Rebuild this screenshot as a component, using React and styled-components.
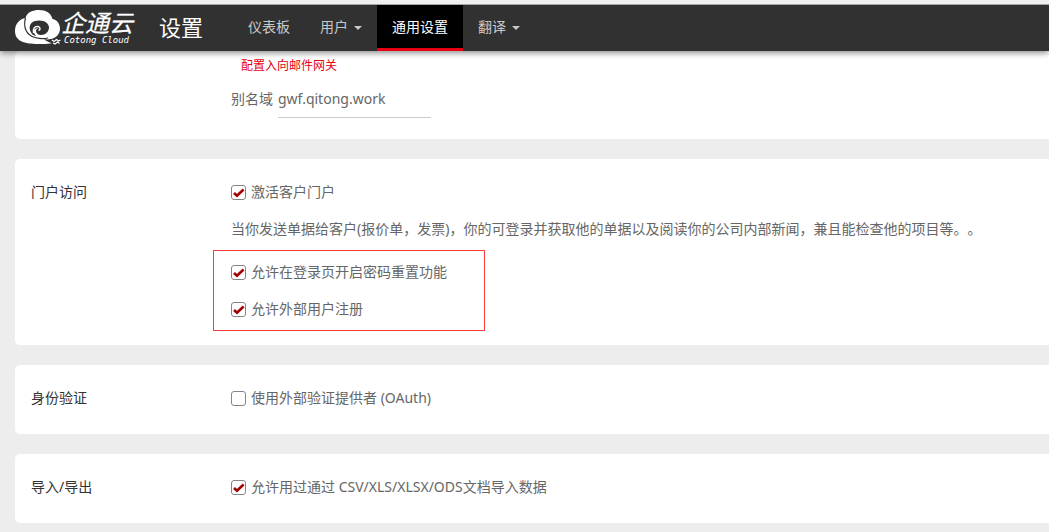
import React from "react";
import styled, { createGlobalStyle } from "styled-components";

const GlobalStyle = createGlobalStyle`
  *, *::before, *::after { box-sizing: border-box; }
  body {
    margin: 0;
    background: #ededed;
    color: #666;
    font: 14px/20px "Noto Sans", "Noto Sans CJK SC", sans-serif;
    text-spacing-trim: space-all;
    overflow-x: hidden;
  }
`;

const Header = styled.header`
  position: relative;
  display: flex;
  align-items: stretch;
  height: 51px;
  padding-left: 15px;
  border-top: 4px solid #f0f0f0;
  background: #313131;
  box-shadow: 0 2px 6px rgba(0, 0, 0, 0.45), inset 0 1px 0 #a6a6a6;
`;

const Brand = styled.a`
  display: flex;
  align-items: center;
  margin-right: 24px;
`;

const Title = styled.h1`
  margin: 0 30px 0 0;
  padding-bottom: 2px;
  align-self: center;
  color: #fff;
  font-size: 22px;
  font-weight: 400;
  line-height: 30px;
`;

const Nav = styled.nav`
  display: flex;
  padding-top: 1px;
`;

const NavButton = styled.button`
  display: flex;
  align-items: center;
  gap: 6px;
  padding: 0 15px;
  border: 0;
  border-bottom: 3px solid ${(p) => (p.$active ? "#e60012" : "transparent")};
  background: ${(p) => (p.$active ? "#000" : "transparent")};
  color: ${(p) => (p.$active ? "#fff" : "#c9c9c9")};
  font: inherit;
  white-space: nowrap;
  cursor: pointer;
`;

const Caret = styled.span`
  margin-top: 2px;
  border: 4px solid transparent;
  border-top-color: currentColor;
  border-bottom: 0;
`;

const Page = styled.main`
  display: flex;
  flex-direction: column;
  gap: 20px;
  padding: 0 0 9px 15px;
`;

const Card = styled.section`
  display: flex;
  padding: ${(p) => p.$padding || "23px 16px 26px"};
  border-radius: 5px 0 0 5px;
  background: #fff;
`;

const CardTitle = styled.h2`
  flex: 0 0 200px;
  margin: 0;
  color: #333;
  font-size: 14px;
  font-weight: 400;
  line-height: 20px;
`;

const CardBody = styled.div`
  flex: 1;
  min-width: 0;
`;

const GatewayLink = styled.a`
  display: block;
  width: fit-content;
  margin: 0 0 14px 10px;
  color: #e60012;
  font-size: 12px;
  line-height: 18px;
  text-decoration: none;
`;

const Field = styled.div`
  display: flex;
  align-items: flex-start;
  gap: 5px;
`;

const TextInput = styled.input`
  width: 153px;
  height: 29px;
  padding: 0 0 10px;
  border: 0;
  border-bottom: 1px solid #ccc;
  border-radius: 0;
  background: transparent;
  color: #666;
  font: inherit;
  outline: 0;
`;

const Description = styled.p`
  margin: 17px 0 11px;
`;

const Highlight = styled.div`
  display: flex;
  flex-direction: column;
  gap: 17px;
  width: 272px;
  margin-left: -18px;
  padding: 11px 17px;
  border: 1px solid #fc3c3c;
`;

const CheckLabel = styled.label`
  display: flex;
  align-items: center;
  gap: 5px;
  width: fit-content;
  white-space: nowrap;
`;

const CheckBox = styled.span`
  display: grid;
  width: 15px;
  height: 15px;

  > * { grid-area: 1 / 1; }
  > svg { pointer-events: none; visibility: hidden; }
  > input:checked + svg { visibility: visible; }
`;

const CheckInput = styled.input`
  appearance: none;
  width: 15px;
  height: 15px;
  margin: 0;
  border: 1px solid #858585;
  border-radius: 3px;
  background: #fff;
`;

function Check({ label, checked }) {
  return (
    <CheckLabel>
      <CheckBox>
        <CheckInput type="checkbox" defaultChecked={checked} />
        <svg width="15" height="15" viewBox="0 0 15 15" aria-hidden="true">
          <path d="M3 8 6 10.800 12.600 4.500" fill="none" stroke="#a30000" strokeWidth="2.600" />
        </svg>
      </CheckBox>
      {label}
    </CheckLabel>
  );
}

function Logo() {
  return (
    <svg width="120" height="37" viewBox="0 0 120 37" overflow="visible" role="img" aria-label="企通云 Cotong Cloud">
      <path
        fill="#fff"
        d="M10.500 9C12 3 18 1 24 1c7 0 12 3 13.500 9 5 1 7.500 5 7.500 10 0 5-4 9-9 10-3 .5-5 .5-7 0 2 2 5 3.500 8 4-3 1-7 1.200-12 1C13 35 0 34 0 22 0 14 5 10 10.500 9Z"
      />
      <path
        d="M10.500 9C8 18 11 26 20 28.500c5 1.500 9 1.500 13 .5"
        fill="none"
        stroke="#313131"
        strokeWidth="1.200"
      />
      <path
        fill="#313131"
        d="M17 25C13 20 14 13.500 20 12c7-2 14 1 14 6.500 0 4-3.500 7.500-8 7.500-3 0-5-2-5-4 0-1.500 1-2.500 2.500-2.500-2.500-.5-4 .5-4.500 2-.5 2 .5 4 2 5.500-1.500-.2-3-.8-4-2Z"
      />
      <path
        d="M18.500 24C17.500 20 19.500 17 23 17.500c2.500.5 2.800 3.500.5 4"
        fill="none"
        stroke="#fff"
        strokeWidth="1.400"
      />
      <g fill="none" stroke="#fff" strokeWidth="1.200">
        <path d="m37 31 2 1.500 2.500-2 2 1.500 2-1M38 34l2 1 2.500-2 2 1.500" />
      </g>
      <g fill="#fff" fontStyle="italic">
        <text x="46" y="23" fontSize="24" stroke="#fff" strokeWidth="0.200" fontFamily="Liberation Sans, Noto Sans CJK SC, sans-serif">企通云</text>
        <text x="49" y="34" fontSize="9" fontFamily="DejaVu Sans Mono, monospace">Cotong Cloud</text>
      </g>
    </svg>
  );
}

export default function App() {
  return (
    <>
      <GlobalStyle />
      <Header>
        <Brand href="#">
          <Logo />
        </Brand>
        <Title>设置</Title>
        <Nav>
          <NavButton type="button">仪表板</NavButton>
          <NavButton type="button">用户<Caret /></NavButton>
          <NavButton type="button" $active>通用设置</NavButton>
          <NavButton type="button">翻译<Caret /></NavButton>
        </Nav>
      </Header>
      <Page>
        <Card $padding="6px 16px 21px 216px">
          <CardBody>
            <GatewayLink href="#">配置入向邮件网关</GatewayLink>
            <Field>
              <label htmlFor="alias-domain">别名域</label>
              <TextInput id="alias-domain" defaultValue="gwf.qitong.work" />
            </Field>
          </CardBody>
        </Card>
        <Card $padding="23px 16px 14px">
          <CardTitle>门户访问</CardTitle>
          <CardBody>
            <Check label="激活客户门户" checked />
            <Description>
              当你发送单据给客户(报价单，发票)，你的可登录并获取他的单据以及阅读你的公司内部新闻，兼且能检查他的项目等。。
            </Description>
            <Highlight>
              <Check label="允许在登录页开启密码重置功能" checked />
              <Check label="允许外部用户注册" checked />
            </Highlight>
          </CardBody>
        </Card>
        <Card>
          <CardTitle>身份验证</CardTitle>
          <CardBody>
            <Check label="使用外部验证提供者 (OAuth)" />
          </CardBody>
        </Card>
        <Card>
          <CardTitle>导入/导出</CardTitle>
          <CardBody>
            <Check label="允许用过通过 CSV/XLS/XLSX/ODS文档导入数据" checked />
          </CardBody>
        </Card>
      </Page>
    </>
  );
}
